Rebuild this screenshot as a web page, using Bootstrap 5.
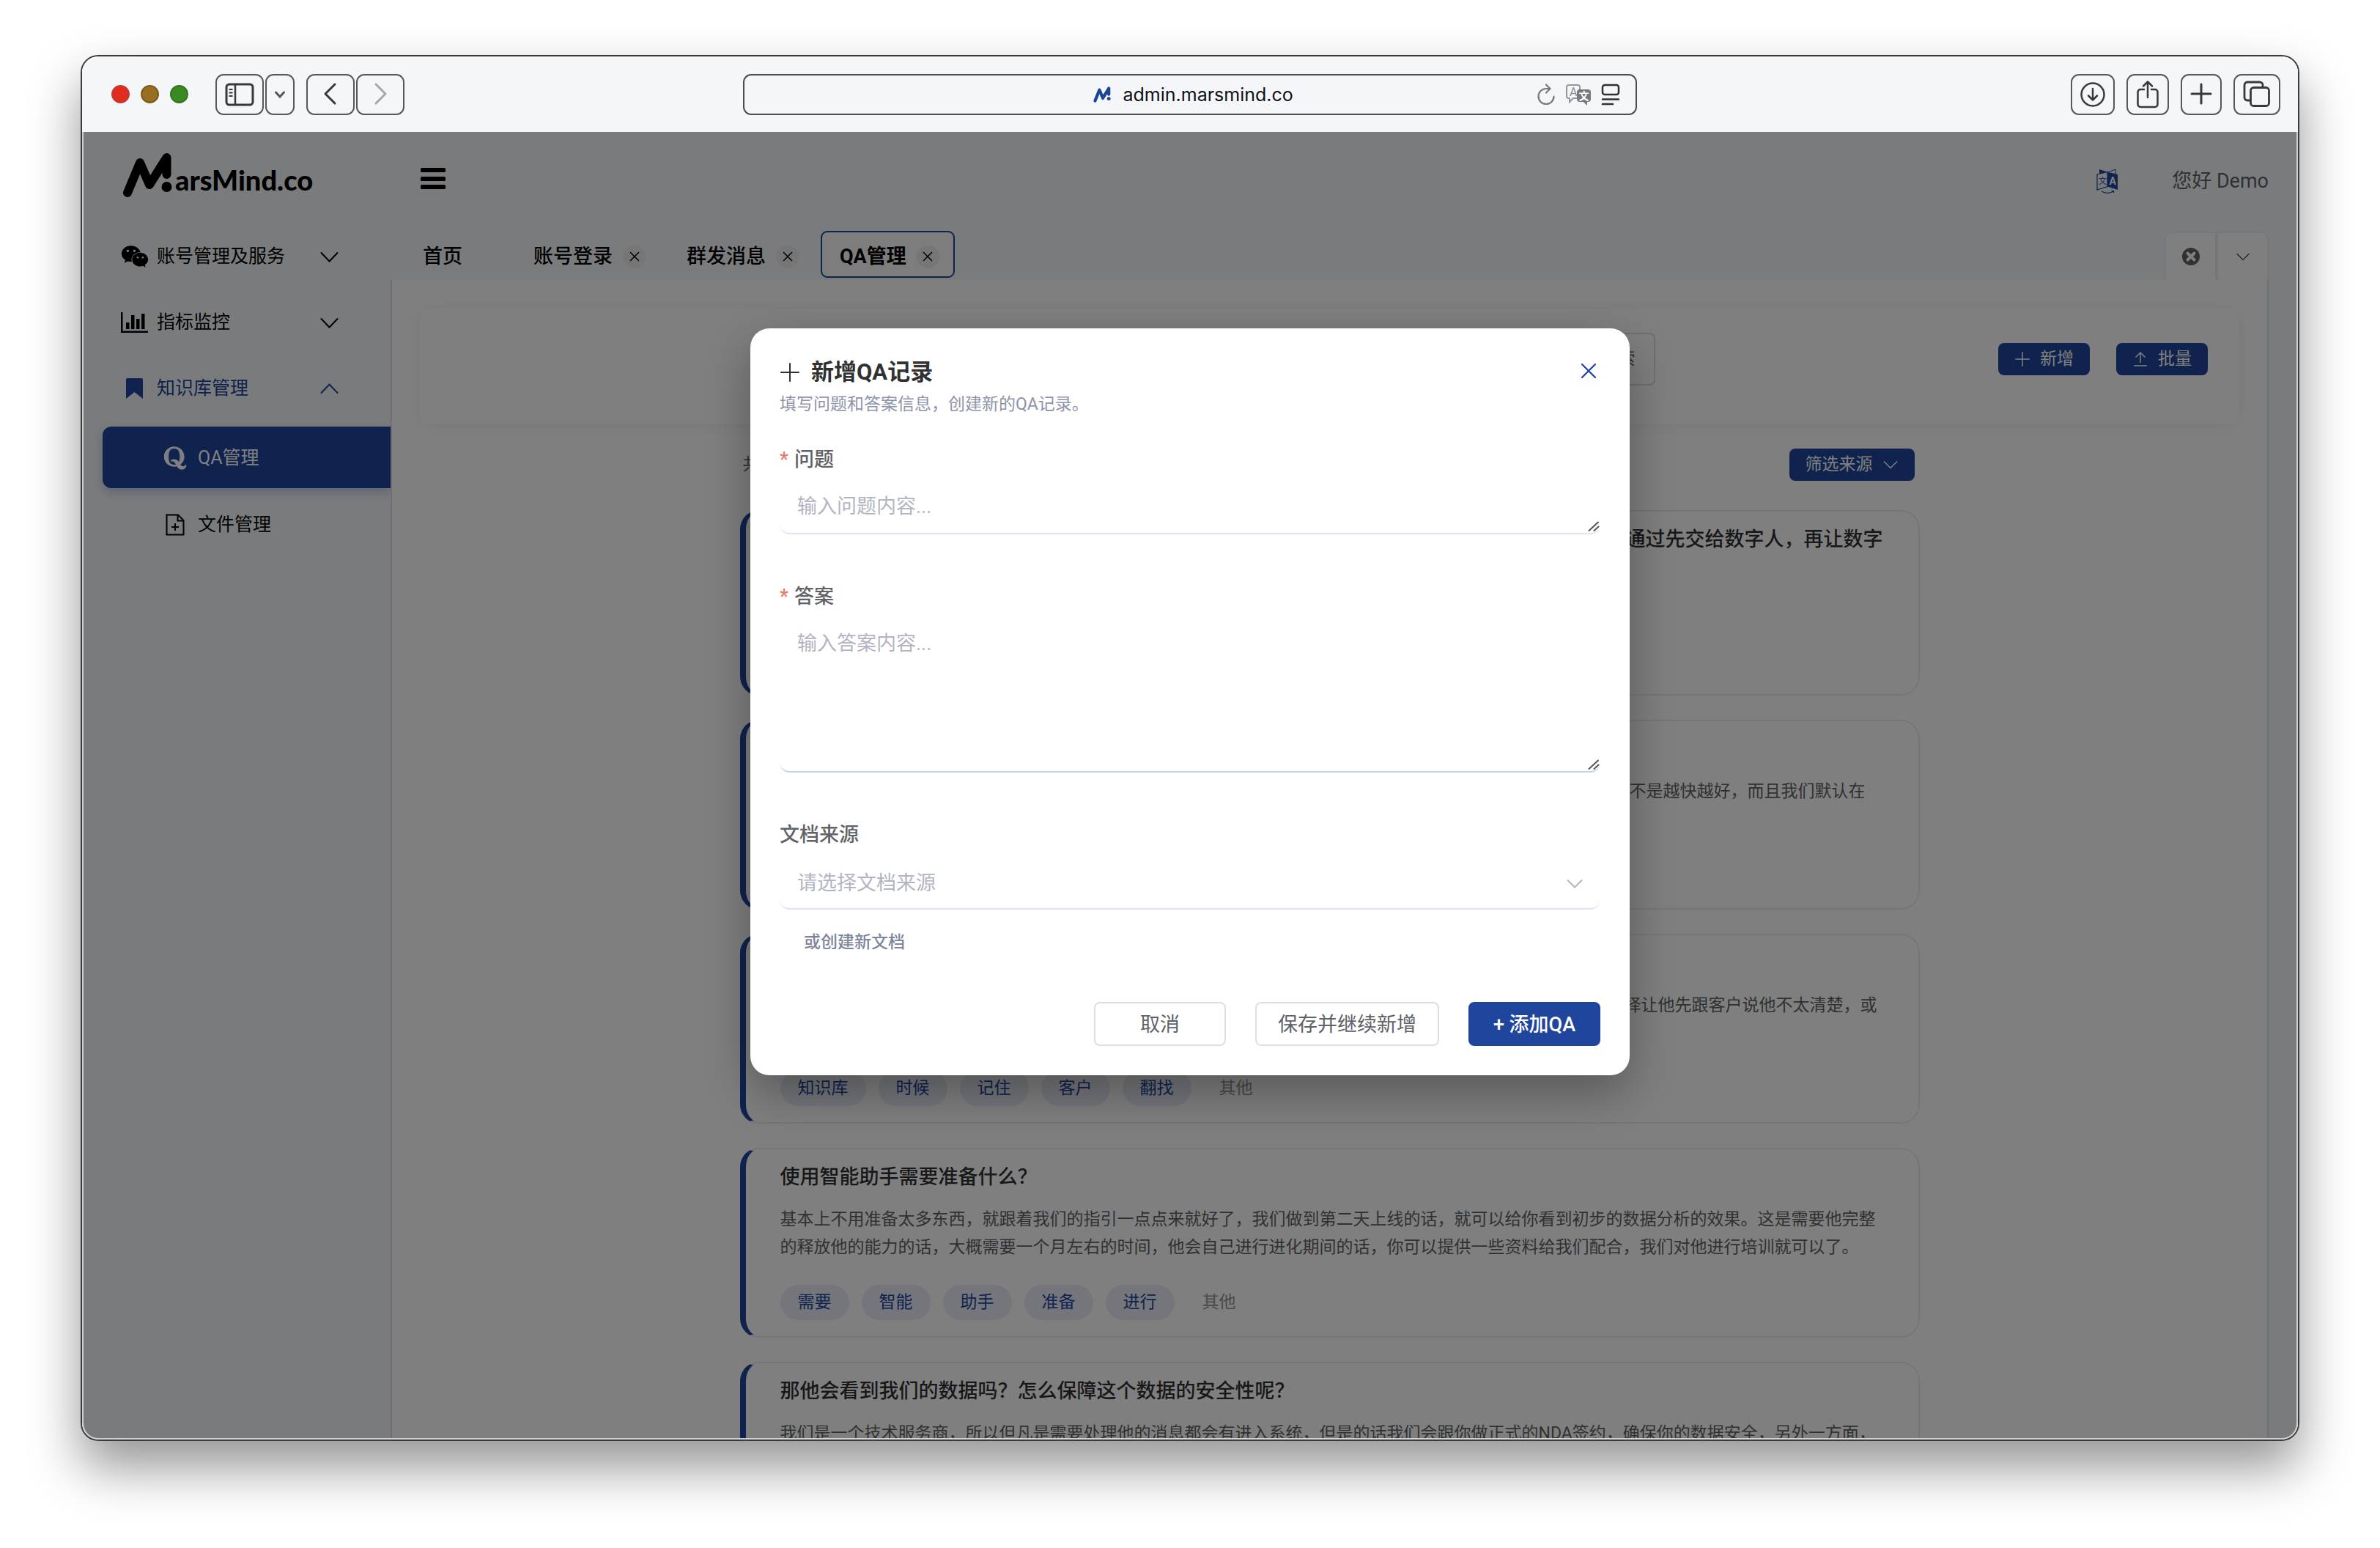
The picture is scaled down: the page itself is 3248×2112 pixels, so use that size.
<!DOCTYPE html>
<html lang="zh-CN">
<head>
<meta charset="utf-8">
<meta name="viewport" content="width=device-width, initial-scale=1">
<title>MarsMind.co – QA管理</title>
<link href="https://cdn.jsdelivr.net/npm/bootstrap@5.3.0/dist/css/bootstrap.min.css" rel="stylesheet">
<style>
:root{--brand:#1f469c;--ink:#606266;--line:#dcdfe6}
body{font-family:Roboto,"Noto Sans CJK SC",sans-serif;font-size:27px;line-height:36px;color:#000;background:#fff;height:100vh;padding:75px 110px 146px;overflow:hidden}
svg{display:block;flex:none}
.window-frame{flex:1;border:2px solid #3c3b3c;border-radius:24px;overflow:hidden;box-shadow:0 36px 70px rgba(0,0,0,.42)}
/* browser toolbar */
.toolbar-top{height:103px;background:#f5f6fa}
.side-slot{flex:1 1 0;min-width:0}
.window-tools{padding-left:40px}
.lights{gap:15px;margin-right:37px}
.light{width:25px;height:25px;border-radius:50%;border:2px solid}
.light-red{background:#e02d1f;border-color:#c63a2c}
.light-amber{background:#986e22;border-color:#7d5a18}
.light-green{background:#3a8a22;border-color:#2f741b}
.btn-pair{gap:2px}
.tool-btn{height:56px;border:2px solid #58585b;border-radius:11px;background:transparent;padding:0;display:flex;align-items:center;justify-content:center;color:#39393b}
.w-40p{width:40px}.w-56p{width:56px}.w-58p{width:58px}.w-60p{width:60px}.w-64p{width:64px}.w-66p{width:66px}
.address{width:1220px;height:56px;border:2px solid #4d4d50;border-radius:11px}
.address-main{gap:17px;margin-left:20px}
.address input{border:0;background:transparent;padding:0;width:244px;font:25px Inter,sans-serif;color:#111;outline:0}
.address-tools{gap:13px;margin-right:21px}
/* application */
.app{flex:1;min-height:0;border:solid #cfd0d2;border-width:0 2px 2px;border-radius:0 0 22px 22px;overflow:hidden;background:#f5f7fa}
.sidebar{flex:0 0 419px;background:#f5f7fa}
.brand-row{height:125px;padding:5px 0 0 53px}
.brand-row svg{margin-bottom:12px}
.brand-name{font:900 38px/50px Lato,sans-serif}
.menu-link{height:90px;padding:0 71px 0 51px;font-size:25px;color:#000;text-decoration:none}
.menu-link.open{color:var(--brand)}
.menu-ico{width:38px}
.menu-text{padding-left:11px}
.sub-link{height:84px;margin:7px 0 7px 26px;padding:2px 0 0 82px;font-size:25px;color:#000;text-decoration:none;border-radius:12px 0 0 12px}
.sub-link.current{background:var(--brand);color:#fff;box-shadow:0 6px 14px rgba(31,70,156,.25)}
.sub-ico{width:35px}
.sub-text{padding-left:13px}
.content-col{flex:1;min-width:0;padding-right:38px}
.head-row{height:125px;padding:2px 0 0 41px;color:var(--ink)}
.user-area{gap:73px;padding-top:6px}
.tab-row{height:77px;padding-left:18px}
.tab-list{gap:9px;padding-top:7px}
.tab-item{height:64px;gap:14px;border:2px solid transparent;border-radius:9px;padding:6px 19px 0 24px;font-weight:500;color:#000}
.tab-item.home{padding-right:60px}
.tab-item.current{border-color:var(--brand);background:#fafbfc;font-weight:700}
.tab-x{width:31px;height:31px;border:0;border-radius:50%;padding:0;background:#ececec;display:flex;align-items:center;justify-content:center}
.corner-btn{width:71px;height:66px;background:#fefefe;border:2px solid #eceef3;border-bottom:0;padding:0;display:flex;align-items:center;justify-content:center;color:#555}
.corner-btn:first-child{border-radius:10px 0 0 0}
.corner-btn:last-child{border-radius:0 10px 0 0}
.panel-body{flex:1;min-height:0;background:#fff;border:solid #d9deea;border-width:0 2px;padding:39px 38px 0;overflow:hidden}
.filter-card{padding:33px 43px 52px;border-radius:12px;box-shadow:0 2px 24px rgba(0,0,0,.06)}
.search-form{width:888px}
.search-form .form-control{height:72px;border:2px solid var(--line);border-right:0;border-radius:8px 0 0 8px;font-size:23px}
.search-form .btn{height:72px;border:2px solid var(--line);border-radius:0 8px 8px 0;padding:0 25px;font-size:23px;color:var(--ink)}
.action-group{gap:36px}
.btn-small{height:44px;gap:13px;background:var(--brand);color:#fff;font-size:23px;line-height:32px;border:0;border-radius:8px;padding:0 22px}
.btn-small:hover{background:var(--brand);color:#fff}
.list-wrap{max-width:1610px}
.count-row{padding:34px 7px 40px 4px;font-size:23px;line-height:32px;color:var(--ink)}
.qa-card{min-height:259px;margin-bottom:33px;border:2px solid #ebedf2;border-left:8px solid var(--brand);border-radius:26px;padding:22px 48px 22px 47px;background:#fff}
.qa-card.short{min-height:253px}
.qa-title{font-size:27px;line-height:32px;font-weight:500;margin:0 0 23px;min-height:32px;color:#303133}
.qa-text{font-size:23px;line-height:38px;margin:0 0 32px;min-height:76px;color:var(--ink)}
.tag-row{gap:17px}
.qa-tag{height:48px;border-radius:24px;padding:0 24px;background:#e9edf6;color:var(--brand);font-size:23px;line-height:48px}
.qa-other{font-size:23px;color:#909399;margin-left:21px}
/* dialog */
.scrim{position:absolute;inset:0;background:rgba(0,0,0,.5)}
.dialog-box{position:relative;width:1200px;margin:268px auto 0;background:#fff;border-radius:26px;padding:41px 40px 40px;box-shadow:0 24px 64px rgba(0,0,0,.3)}
.dlg-title{gap:15px;font-size:31px;line-height:38px;font-weight:700;color:#303133;margin:0}
.dlg-note{font-size:23px;line-height:32px;color:#8e93a9;margin:9px 0 41px}
.dlg-label{display:flex;gap:8px;line-height:36px;font-weight:500;color:var(--ink);margin-bottom:6px}
.dlg-label.wide{margin-bottom:12px}
.star{color:#ec786c}
.field{position:relative;margin-bottom:67px}
.field.last{margin-bottom:29px}
.field .form-control,.field .form-select{border:0;border-bottom:2px solid #dfe4ee;border-radius:14px;font-size:27px;line-height:36px;padding:22px 24px 18px;resize:none;box-shadow:none;background:#fff;color:#b2b5c1}
.field .form-control::placeholder{color:#b2b5c1;opacity:1}
.area-s{height:78px;overflow:hidden}.area-l{height:216px}
.field .area-l{border-bottom-color:#c6d2e0}
.field .form-select{height:72px;padding:2px 24px 0;appearance:none}
.grip{position:absolute;right:1px;bottom:4px}
.caret-down{position:absolute;right:24px;top:30px}
.new-doc{display:block;font-size:23px;line-height:32px;font-weight:500;color:#7d849b;text-decoration:none;padding-left:33px}
.dlg-actions{gap:40px;margin-top:65px}
.dlg-btn{height:60px;min-width:180px;padding:2px 29px 0;font-size:27px;border:2px solid var(--line);border-radius:8px;color:var(--ink);background:#fff;line-height:36px}
.dlg-btn.main{background:var(--brand);border-color:var(--brand);color:#fff;font-weight:500;padding:2px 26px 0}
.close-x{border:0;background:transparent;padding:5px 6px;margin-top:2px}
</style>
</head>
<body class="d-flex flex-column">
<div class="window-frame d-flex flex-column">

  <div class="toolbar-top d-flex align-items-center flex-shrink-0">
    <div class="side-slot">
      <div class="window-tools d-flex align-items-center">
        <div class="lights d-flex">
          <span class="light light-red"></span>
          <span class="light light-amber"></span>
          <span class="light light-green"></span>
        </div>
        <div class="btn-pair d-flex">
          <button class="tool-btn w-66p" aria-label="边栏"><svg width="40" height="32" viewBox="0 0 40 32" fill="none" stroke="currentColor"><rect x="2" y="2" width="36" height="28" rx="4" stroke-width="3"/><path d="M14 2v28" stroke-width="2.5"/><path d="M5.500 9h5M5.500 13.500h5M5.500 18h5" stroke-width="2"/></svg></button>
          <button class="tool-btn w-40p" aria-label="标签组"><svg width="16" height="12" viewBox="0 0 16 12" fill="none" stroke="#55565a" stroke-width="3" stroke-linecap="round"><path d="M2.500 3 8 9l5.500-6"/></svg></button>
        </div>
        <div class="btn-pair d-flex ms-3">
          <button class="tool-btn w-66p" aria-label="后退"><svg width="20" height="36" viewBox="0 0 20 36" fill="none" stroke="currentColor" stroke-width="3" stroke-linecap="round" stroke-linejoin="round"><path d="M16 4 3 17l13 13"/></svg></button>
          <button class="tool-btn w-66p" aria-label="前进"><svg width="20" height="36" viewBox="0 0 20 36" fill="none" stroke="#a6a7ab" stroke-width="3" stroke-linecap="round" stroke-linejoin="round"><path d="M4 4l13 13L4 30"/></svg></button>
        </div>
      </div>
    </div>
    <div class="address d-flex align-items-center">
      <div class="side-slot"></div>
      <div class="address-main d-flex align-items-center">
        <svg width="24" height="22" viewBox="0 0 68 62" fill="none" stroke="#1c4496" stroke-width="12" stroke-linecap="round" stroke-linejoin="round"><path d="M7 55 24 13l13 32L60 7v23"/><circle cx="60" cy="47" r="7" fill="#1c4496" stroke="none"/></svg>
        <input type="text" aria-label="地址" value="admin.marsmind.co">
      </div>
      <div class="side-slot">
        <div class="address-tools d-flex justify-content-end align-items-center">
          <svg width="26" height="30" viewBox="0 0 26 30" fill="none" stroke="#77787c" stroke-width="2.200" stroke-linecap="round" stroke-linejoin="round"><path d="M13 7A10.500 10.500 0 1 0 23.500 17.500M13 7h5M13 1.500 18.500 7 13 12.500"/></svg>
          <svg width="36" height="30" viewBox="0 0 36 30"><path d="M5 2h12a3 3 0 0 1 3 3v12a3 3 0 0 1-3 3h-6l-5 5v-5H5a3 3 0 0 1-3-3V5a3 3 0 0 1 3-3z" fill="none" stroke="#96979b" stroke-width="2"/><text x="6" y="17" font-size="16" fill="#88898d">A</text><path d="M19 8h12a4 4 0 0 1 4 4v9a4 4 0 0 1-4 4h-1v5l-5-5h-6a4 4 0 0 1-3-4v-9a4 4 0 0 1 3-4z" fill="#77787c"/><text x="18.500" y="22" font-size="14" font-weight="700" fill="#fff">文</text></svg>
          <svg width="26" height="30" viewBox="0 0 26 30" fill="none" stroke="#303033" stroke-width="2.500" stroke-linecap="round"><rect x="2" y="2" width="22" height="13" rx="3"/><path d="M2 21.500h22M2 28h14"/></svg>
        </div>
      </div>
    </div>
    <div class="side-slot">
      <div class="d-flex justify-content-end gap-3 pe-4">
        <button class="tool-btn w-60p" aria-label="下载"><svg width="36" height="36" viewBox="0 0 36 36" fill="none" stroke="currentColor" stroke-width="2.500" stroke-linecap="round" stroke-linejoin="round"><circle cx="18" cy="18" r="15.500"/><path d="M18 10v15M12 19.500l6 6 6-6"/></svg></button>
        <button class="tool-btn w-58p" aria-label="分享"><svg width="32" height="40" viewBox="0 0 32 40" fill="none" stroke="currentColor" stroke-width="2.500" stroke-linecap="round" stroke-linejoin="round"><path d="M11 13H6a3.500 3.500 0 0 0-3.500 3.500v17A3.500 3.500 0 0 0 6 37h20a3.500 3.500 0 0 0 3.500-3.500v-17A3.500 3.500 0 0 0 26 13h-5M16 24V3M10 8.500 16 2.500l6 6"/></svg></button>
        <button class="tool-btn w-56p" aria-label="新标签"><svg width="30" height="32" viewBox="0 0 30 32" fill="none" stroke="currentColor" stroke-width="3" stroke-linecap="round"><path d="M15 2v26M2 15h26"/></svg></button>
        <button class="tool-btn w-64p" aria-label="标签概览"><svg width="38" height="38" viewBox="0 0 38 38" fill="none" stroke="currentColor" stroke-width="2.800"><rect x="10.500" y="9.500" width="25" height="25" rx="4"/><path d="M10 27H6a4 4 0 0 1-4-4V6a4 4 0 0 1 4-4h17a4 4 0 0 1 4 4v3"/></svg></button>
      </div>
    </div>
  </div>

  <div class="app d-flex position-relative">
    <aside class="sidebar">
      <div class="brand-row d-flex align-items-center">
        <svg width="68" height="62" viewBox="0 0 68 62" fill="none" stroke="#000" stroke-width="12" stroke-linecap="round" stroke-linejoin="round"><path d="M7 55 24 14l13 30L60.500 7v23"/><path d="M50 22 60 8v20z" fill="#000" stroke-width="4"/><circle cx="60.500" cy="47" r="7" fill="#000" stroke="none"/></svg>
        <span class="brand-name ms-1">arsMind.co</span>
      </div>
      <nav>
        <a href="#" class="menu-link d-flex align-items-center">
          <span class="menu-ico"><svg width="38" height="34" viewBox="0 0 576 512" fill="#000"><path d="M385.200 167.600c6.400 0 12.600.3 18.800 1.100C387.400 90.300 303.300 32 207.700 32 100.500 32 13 104.800 13 197.400c0 53.400 29.300 97.500 77.900 131.600l-19.300 58.600 68-34.100c24.400 4.800 43.800 9.700 68.200 9.700 6.200 0 12.100-.3 18.300-.8-4-12.900-6.200-26.600-6.200-40.800-.1-84.900 72.900-154 165.300-154zm-104.500-52.900c14.500 0 24.200 9.700 24.200 24.400 0 14.500-9.700 24.200-24.200 24.200-14.800 0-29.300-9.700-29.300-24.200.1-14.700 14.600-24.400 29.300-24.400zm-136.400 48.600c-14.500 0-29.300-9.700-29.300-24.200 0-14.800 14.800-24.400 29.300-24.400 14.800 0 24.400 9.700 24.400 24.400 0 14.600-9.600 24.200-24.400 24.200zM563 319.400c0-77.900-77.900-141.300-165.400-141.300-92.700 0-165.400 63.400-165.400 141.300S305 460.700 397.600 460.700c19.300 0 38.900-5.100 58.600-9.900l53.400 29.300-14.800-48.600C534 402.100 563 363.200 563 319.400zm-219.100-24.500c-9.700 0-19.300-9.700-19.300-19.600 0-9.700 9.700-19.300 19.300-19.300 14.800 0 24.400 9.700 24.400 19.300 0 10-9.700 19.600-24.400 19.600zm107.100 0c-9.700 0-19.300-9.700-19.300-19.600 0-9.700 9.700-19.300 19.300-19.300 14.500 0 24.400 9.700 24.400 19.300.1 10-9.900 19.600-24.400 19.600z"/></svg></span>
          <span class="menu-text flex-fill">账号管理及服务</span>
          <svg width="25" height="15" viewBox="0 0 25 15" fill="none" stroke="#000" stroke-width="2" stroke-linecap="round"><path d="M1.500 2 12.500 13.500 23.500 2"/></svg>
        </a>
        <a href="#" class="menu-link d-flex align-items-center">
          <span class="menu-ico"><svg width="38" height="28" viewBox="0 0 38 28" fill="#000"><path d="M0 0h2.500v25.500H37V28H0zM7 14h4.500v9H7zM14 4h4.500v19H14zM21 9h4.500v14H21zM28 2h4.500v21H28z"/></svg></span>
          <span class="menu-text flex-fill">指标监控</span>
          <svg width="25" height="15" viewBox="0 0 25 15" fill="none" stroke="#000" stroke-width="2" stroke-linecap="round"><path d="M1.500 2 12.500 13.500 23.500 2"/></svg>
        </a>
        <a href="#" class="menu-link open d-flex align-items-center">
          <span class="menu-ico"><svg width="38" height="28" viewBox="0 0 38 28" fill="#1f469c"><path d="M9 0h19a2 2 0 0 1 2 2v26l-11.500-9L7 28V2a2 2 0 0 1 2-2z"/></svg></span>
          <span class="menu-text flex-fill">知识库管理</span>
          <svg width="25" height="15" viewBox="0 0 25 15" fill="none" stroke="#1f469c" stroke-width="2" stroke-linecap="round"><path d="M1.500 13 12.500 1.500 23.500 13"/></svg>
        </a>
        <a href="#" class="sub-link current d-flex align-items-center">
          <span class="sub-ico"><svg width="34" height="36" viewBox="0 0 448 512" fill="#fff"><path d="M440.500 386.700h-29.300c-1.500 13.500-10.500 30.800-33 30.800-20.500 0-35.300-14.200-49.500-35.800 44.200-34.200 74.700-87.500 74.700-153C403.500 111.200 306.800 32 205 32 105.300 32 7.300 111.700 7.300 228.700c0 134.100 131.300 221.600 249 189C276 451.300 302 480 351.500 480c81.800 0 90.800-75.300 89-93.300zM297 329.200C277.500 300 253.300 277 205.500 277c-30.500 0-54.300 10-69 22.800l12.200 24.300c6.200-3 13-4 19.800-4 35.500 0 53.700 30.800 69.200 61.300-10 3-20.700 4.200-32.700 4.200-75 0-107.500-53-107.500-156.700C97.500 124.500 130 71 205 71c76.200 0 108.700 53.500 108.700 157.700.1 41.800-5.400 75.600-16.700 100.500z"/></svg></span>
          <span class="sub-text">QA管理</span>
        </a>
        <a href="#" class="sub-link d-flex align-items-center">
          <span class="sub-ico"><svg width="34" height="30" viewBox="0 0 34 30" fill="none" stroke="#000" stroke-width="2"><path d="M5.500 1.500H21l7.500 7.500v19.500h-23zM20.500 1.500V9.500h8M17 13v10M12 18h10"/></svg></span>
          <span class="sub-text">文件管理</span>
        </a>
      </nav>
    </aside>

    <div class="content-col d-flex flex-column">
      <header class="head-row d-flex align-items-center justify-content-between flex-shrink-0">
        <button class="btn p-0 border-0" aria-label="菜单"><svg width="34" height="30" viewBox="0 0 34 30" fill="#000"><rect width="34" height="6" rx="1.500"/><rect y="12" width="34" height="6" rx="1.500"/><rect y="23" width="34" height="6" rx="1.500"/></svg></button>
        <div class="user-area d-flex align-items-center">
          <svg width="30" height="34" viewBox="0 0 30 34"><path d="M4 1 16 5v18L4 12zM15 6l11-4v8" fill="#1f469c"/><path d="M1 8 15 4.500v20L1 29z" fill="#f5f7fa" stroke="#1f469c" stroke-width="1.200"/><path d="M15 4.500 29 8v21l-14-4.500z" fill="#1f469c"/><path d="M16 5 26 1v6" fill="#f5f7fa" stroke="#1f469c"/><text x="3" y="21" font-size="11" fill="#1f469c">文</text><text x="17.500" y="22" font-size="14" font-weight="700" fill="#fff">A</text><path d="M7 31c5 3 11 3 16 0M20.500 30.500h3v2.500" fill="none" stroke="#1f469c" stroke-width="1.200"/></svg>
          <span>您好 Demo</span>
        </div>
      </header>

      <div class="tab-row d-flex align-items-center justify-content-between flex-shrink-0">
        <div class="tab-list d-flex">
          <div class="tab-item home d-flex align-items-center">首页</div>
          <div class="tab-item d-flex align-items-center">账号登录 <button class="tab-x" aria-label="关闭"><svg width="14" height="14" viewBox="0 0 14 14" stroke="#000" stroke-width="1.500"><path d="M1 1l12 12M13 1 1 13"/></svg></button></div>
          <div class="tab-item d-flex align-items-center">群发消息 <button class="tab-x" aria-label="关闭"><svg width="14" height="14" viewBox="0 0 14 14" stroke="#000" stroke-width="1.500"><path d="M1 1l12 12M13 1 1 13"/></svg></button></div>
          <div class="tab-item current d-flex align-items-center">QA管理 <button class="tab-x" aria-label="关闭"><svg width="14" height="14" viewBox="0 0 14 14" stroke="#000" stroke-width="1.500"><path d="M1 1l12 12M13 1 1 13"/></svg></button></div>
        </div>
        <div class="d-flex align-self-end">
          <button class="corner-btn" aria-label="关闭全部"><svg width="24" height="24" viewBox="0 0 24 24"><circle cx="12" cy="12" r="12" fill="#606266"/><path d="M7.500 7.500l9 9M16.500 7.500l-9 9" stroke="#fefefe" stroke-width="4" stroke-linecap="round"/></svg></button>
          <button class="corner-btn" aria-label="更多"><svg width="18" height="11" viewBox="0 0 18 11" fill="none" stroke="#55565a" stroke-width="1.500" stroke-linecap="round"><path d="M1 1.500 9 9.500l8-8"/></svg></button>
        </div>
      </div>

      <main class="panel-body">
        <div class="filter-card d-flex align-items-center">
          <div class="side-slot"></div>
          <form class="search-form d-flex">
            <input class="form-control" type="search" aria-label="搜索问题">
            <button class="btn flex-shrink-0" type="button">搜索</button>
          </form>
          <div class="side-slot action-group d-flex justify-content-end">
            <button class="btn btn-small d-flex align-items-center"><svg width="22" height="22" viewBox="0 0 22 22" stroke="#fff" stroke-width="1.500"><path d="M11 1v20M1 11h20"/></svg>新增</button>
            <button class="btn btn-small d-flex align-items-center"><svg width="22" height="22" viewBox="0 0 22 22" fill="none" stroke="#fff" stroke-width="1.500"><path d="M11 16V2.500M4.500 8.500 11 2l6.500 6.500M2 20h18"/></svg>批量</button>
          </div>
        </div>

        <div class="list-wrap mx-auto">
          <div class="count-row d-flex align-items-center justify-content-between">
            <span>共</span>
            <button class="btn btn-small d-flex align-items-center">筛选来源<svg width="22" height="12" viewBox="0 0 22 12" fill="none" stroke="#fff" stroke-width="1.500"><path d="M2 1.500 11 10.500l9-9"/></svg></button>
          </div>

          <article class="qa-card short">
            <h2 class="qa-title text-end">通过先交给数字人，再让数字</h2>
          </article>
          <article class="qa-card">
            <h2 class="qa-title"></h2>
            <p class="qa-text text-end me-4">不是越快越好，而且我们默认在</p>
          </article>
          <article class="qa-card">
            <h2 class="qa-title"></h2>
            <p class="qa-text text-end me-2">择让他先跟客户说他不太清楚，或</p>
            <div class="tag-row d-flex align-items-center">
              <span class="qa-tag">知识库</span><span class="qa-tag">时候</span><span class="qa-tag">记住</span><span class="qa-tag">客户</span><span class="qa-tag">翻找</span><span class="qa-other">其他</span>
            </div>
          </article>
          <article class="qa-card">
            <h2 class="qa-title">使用智能助手需要准备什么？</h2>
            <p class="qa-text">基本上不用准备太多东西，就跟着我们的指引一点点来就好了，我们做到第二天上线的话，就可以给你看到初步的数据分析的效果。这是需要他完整的释放他的能力的话，大概需要一个月左右的时间，他会自己进行进化期间的话，你可以提供一些资料给我们配合，我们对他进行培训就可以了。</p>
            <div class="tag-row d-flex align-items-center">
              <span class="qa-tag">需要</span><span class="qa-tag">智能</span><span class="qa-tag">助手</span><span class="qa-tag">准备</span><span class="qa-tag">进行</span><span class="qa-other">其他</span>
            </div>
          </article>
          <article class="qa-card">
            <h2 class="qa-title">那他会看到我们的数据吗？怎么保障这个数据的安全性呢？</h2>
            <p class="qa-text">我们是一个技术服务商，所以但凡是需要处理他的消息都会有进入系统，但是的话我们会跟你做正式的NDA签约，确保你的数据安全，另外一方面，</p>
          </article>
        </div>
      </main>
    </div>

    <div class="scrim">
      <div class="dialog-box" role="dialog" aria-labelledby="dlgTitle">
        <div class="d-flex align-items-start justify-content-between">
          <h1 class="dlg-title d-flex align-items-center" id="dlgTitle"><svg width="28" height="28" viewBox="0 0 28 28" stroke="#303133" stroke-width="2" stroke-linecap="round"><path d="M14 2v24M2 14h24"/></svg>新增QA记录</h1>
          <button class="close-x" aria-label="关闭"><svg width="20" height="20" viewBox="0 0 20 20" stroke="#1f469c" stroke-width="2.200" stroke-linecap="round"><path d="M1 1l18 18M19 1 1 19"/></svg></button>
        </div>
        <p class="dlg-note">填写问题和答案信息，创建新的QA记录。</p>

        <label class="dlg-label" for="question"><span class="star">*</span>问题</label>
        <div class="field">
          <textarea class="form-control area-s" id="question" placeholder="输入问题内容..."></textarea>
          <svg class="grip" width="16" height="14" viewBox="0 0 16 14" stroke="#555" stroke-width="2" stroke-linecap="round"><path d="M1.500 13 14 1.500M8.500 13 14.500 7.500"/></svg>
        </div>

        <label class="dlg-label" for="answer"><span class="star">*</span>答案</label>
        <div class="field">
          <textarea class="form-control area-l" id="answer" placeholder="输入答案内容..."></textarea>
          <svg class="grip" width="16" height="14" viewBox="0 0 16 14" stroke="#555" stroke-width="2" stroke-linecap="round"><path d="M1.500 13 14 1.500M8.500 13 14.500 7.500"/></svg>
        </div>

        <label class="dlg-label wide" for="source">文档来源</label>
        <div class="field last">
          <select class="form-select" id="source"><option>请选择文档来源</option></select>
          <svg class="caret-down" width="22" height="14" viewBox="0 0 22 14" fill="none" stroke="#b2b5c1" stroke-width="2" stroke-linecap="round"><path d="M1.500 2 11 11.500 20.500 2"/></svg>
        </div>
        <a href="#" class="new-doc">或创建新文档</a>

        <div class="dlg-actions d-flex justify-content-end">
          <button class="dlg-btn">取消</button>
          <button class="dlg-btn">保存并继续新增</button>
          <button class="dlg-btn main">+ 添加QA</button>
        </div>
      </div>
    </div>
  </div>
</div>
<script src="https://cdn.jsdelivr.net/npm/bootstrap@5.3.0/dist/js/bootstrap.bundle.min.js"></script>
</body>
</html>
